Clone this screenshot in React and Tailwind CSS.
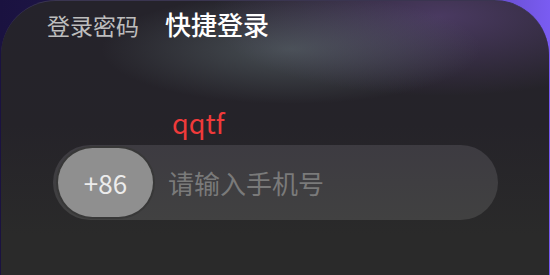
const App = () => {
  return (
    <div
      className="w-[550px] h-[275px] overflow-hidden bg-[linear-gradient(90deg,#1a1240_0%,#2a1f5a_55%,#7a5cf2_100%)]"
      style={{ fontFamily: '"Noto Sans CJK SC", "Noto Sans", sans-serif' }}
    >
      <div className="mx-px h-[275px] rounded-t-[55px] bg-[radial-gradient(ellipse_190px_55px_at_290px_48px,rgba(95,108,112,0.6),transparent),radial-gradient(ellipse_230px_80px_at_440px_15px,rgba(110,80,150,0.5),transparent),linear-gradient(180deg,#25232b_0%,#252329_45%,#2a2a2a_85%)] border-t border-[#3a3550]">
        <div className="flex items-end gap-[26px] pl-[46px] pt-[4px]">
          <span className="text-[23px] leading-[36px] text-[#bdbdbd]">登录密码</span>
          <span className="text-[26px] leading-[38px] font-medium text-white">快捷登录</span>
        </div>

        <div className="pl-[171px] pt-[62px] text-[27px] leading-[36px] text-[#f03a3a]">qqtf</div>

        <div className="ml-[52px] mt-[4px] w-[445px] h-[75px] rounded-full bg-[linear-gradient(180deg,#3d3b41,#414141)] flex items-center pl-[5px]">
          <div className="w-[95px] h-[69px] rounded-full bg-[#8f8f8f] shadow-[0_0_0_2px_#383838] flex items-center justify-center text-[26px] text-[#ececec]">
            +86
          </div>
          <span className="ml-[15px] text-[26px] text-[#7a7a7a]">请输入手机号</span>
        </div>
      </div>
    </div>
  );
};

export default App;
